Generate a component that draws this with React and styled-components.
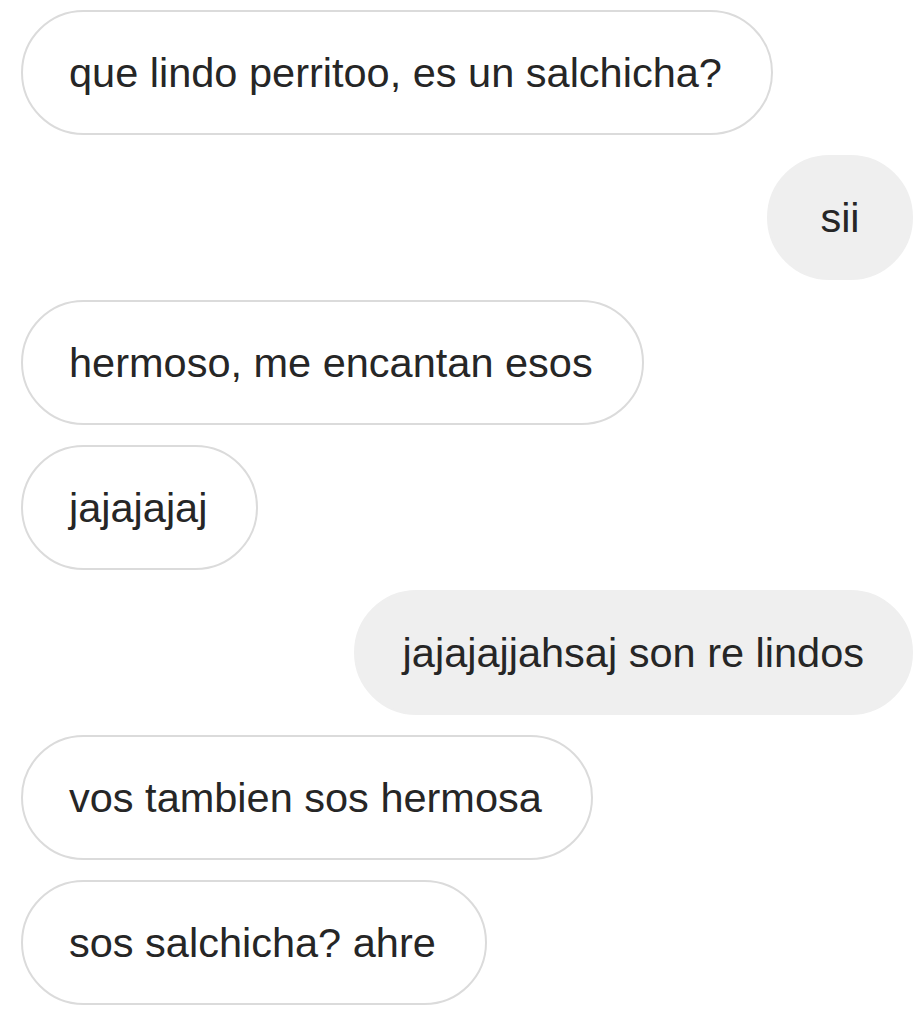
import React from "react";
import styled, { createGlobalStyle } from "styled-components";

const GlobalStyle = createGlobalStyle`
    html, body {
        margin: 0;
        padding: 0;
        background: #ffffff;
    }
`
const Thread = styled.div`
    width: 923px;
    height: 1019px;
    box-sizing: border-box;
    padding: 10px 10px 0 21px;
    display: flex;
    flex-direction: column;
    gap: 20px;
    background: #ffffff;
    overflow: hidden;
`
const Row = styled.div`
    display: flex;
    justify-content: ${({mine}) => mine ? "flex-end" : "flex-start"};
`
const Bubble = styled.div`
    box-sizing: border-box;
    height: 125px;
    min-width: 146px;
    display: flex;
    align-items: center;
    justify-content: center;
    padding: 0 ${({mine}) => mine ? "47px" : "49px 0 46px"};
    border-radius: 63px;
    border: 2px solid ${({mine}) => mine ? "#efefef" : "#dbdbdb"};
    background: ${({mine}) => mine ? "#efefef" : "#ffffff"};
    color: #262626;
    font-family: "Liberation Sans", Arial, sans-serif;
    font-size: 41.5px;
    white-space: nowrap;
`

const messages = [
    {text: "que lindo perritoo, es un salchicha?"},
    {text: "sii", mine: true},
    {text: "hermoso, me encantan esos"},
    {text: "jajajajaj"},
    {text: "jajajajjahsaj son re lindos", mine: true},
    {text: "vos tambien sos hermosa"},
    {text: "sos salchicha? ahre"},
]

const App = () => {
    return(
        <>
            <GlobalStyle/>
            <Thread>
                {messages.map((m, i) => (
                    <Row key={i} mine={m.mine}>
                        <Bubble mine={m.mine}>{m.text}</Bubble>
                    </Row>
                ))}
            </Thread>
        </>
    )
}

export default App
